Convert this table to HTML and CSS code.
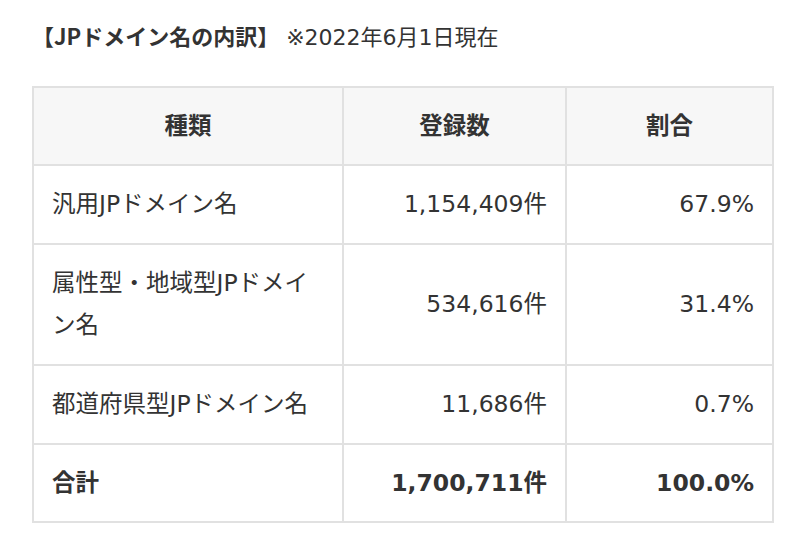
FILE: index.html
```html
<!DOCTYPE html>
<html lang="ja">
<head>
<meta charset="utf-8">
<link rel="stylesheet" href="styles.css">
</head>
<body>
<div class="page">
  <p class="title"><strong class="title-main">【JPドメイン名の内訳】</strong> <span class="title-note">※2022年6月1日現在</span></p>
  <table class="domain-table">
    <colgroup>
      <col class="c1"><col class="c2"><col class="c3">
    </colgroup>
    <thead>
      <tr><th>種類</th><th>登録数</th><th>割合</th></tr>
    </thead>
    <tbody>
      <tr><td>汎用JPドメイン名</td><td class="num">1,154,409件</td><td class="num">67.9%</td></tr>
      <tr><td>属性型・地域型JPドメイン名</td><td class="num">534,616件</td><td class="num">31.4%</td></tr>
      <tr><td>都道府県型JPドメイン名</td><td class="num">11,686件</td><td class="num">0.7%</td></tr>
      <tr class="total"><td>合計</td><td class="num">1,700,711件</td><td class="num">100.0%</td></tr>
    </tbody>
  </table>
</div>
</body>
</html>
```

FILE: styles.css
```css
html, body {
  margin: 0;
  padding: 0;
  background: #fff;
}
body {
  font-family: "DejaVu Sans", "Noto Sans CJK JP", sans-serif;
  color: #333;
}
.page {
  padding: 18px 28px 0 32px;
}
.title {
  margin: 0 0 31px;
  font-size: 22px;
  line-height: 34px;
}
.title-main {
  font-family: "Noto Sans CJK JP", sans-serif;
  font-weight: 700;
}
.title-note {
  font-family: "DejaVu Sans", "Noto Sans CJK JP", sans-serif;
  font-weight: 400;
}
.domain-table {
  border-collapse: collapse;
  width: 740px;
  table-layout: fixed;
  font-size: 23.5px;
}
.c1 { width: 310px; }
.c2 { width: 223px; }
.c3 { width: 207px; }
.domain-table th,
.domain-table td {
  border: 2px solid #e1e1e1;
  padding: 17px 18px 18px;
  line-height: 42px;
  font-weight: 400;
  text-align: left;
}
.domain-table th {
  background: #f7f7f7;
  font-weight: 700;
  text-align: center;
  padding-bottom: 17px;
}
.domain-table td.num {
  text-align: right;
}
.domain-table .total td {
  font-weight: 700;
  padding-bottom: 17px;
}
```
